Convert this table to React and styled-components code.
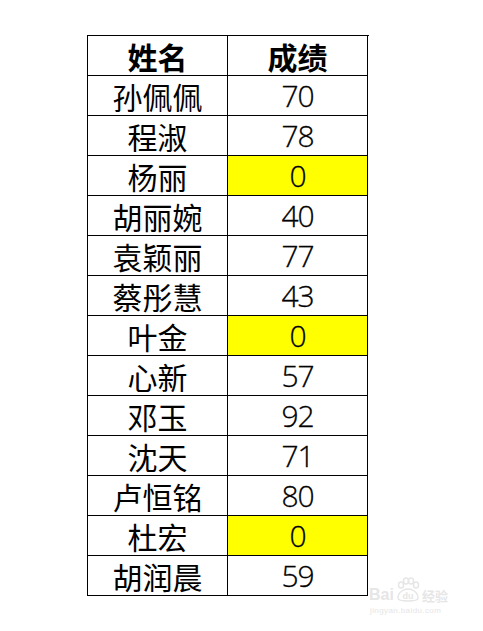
import React from 'react';
import styled, { createGlobalStyle } from 'styled-components';

const GlobalStyle = createGlobalStyle`
  html, body {
    margin: 0;
    padding: 0;
    background: #fff;
  }
`;

const Page = styled.div`
  position: relative;
  width: 483px;
  height: 631px;
  padding: 35px 0 0 87px;
  box-sizing: border-box;
  font-family: "Noto Sans CJK SC", "Noto Sans", sans-serif;
  color: #000;
`;

const Table = styled.div`
  display: grid;
  grid-template-columns: 140px 140px;
  width: 281px;
  border-top: 1px solid #000;
  border-left: 1px solid #000;
`;

const Cell = styled.div`
  height: 39px;
  display: flex;
  align-items: center;
  justify-content: center;
  border-right: 1px solid #000;
  border-bottom: 1px solid #000;
  background: ${(p) => (p.$highlight ? '#ffff00' : '#fff')};
  font-size: 30px;
  font-weight: ${(p) => (p.$head ? 700 : 400)};
  line-height: 36px;
`;

const Score = styled.span`
  font-family: "Open Sans", "Noto Sans", sans-serif;
  font-weight: 300;
  font-size: 30px;
  line-height: 36px;
  letter-spacing: -1px;
  -webkit-text-stroke: 0.3px #000;
`;

const Watermark = styled.div`
  position: absolute;
  left: 369px;
  top: 577px;
  width: 92px;
  color: #e6e6e6;
  font-family: "Liberation Sans", sans-serif;
`;

const Mark = styled.div`
  display: flex;
  align-items: flex-end;
  gap: 1px;
  font-size: 16px;
  font-weight: 700;
  line-height: 16px;
`;

const MarkCn = styled.span`
  font-family: "Noto Sans CJK SC", sans-serif;
  font-size: 13px;
  line-height: 14px;
`;

const MarkSmall = styled.div`
  font-size: 8px;
  margin-top: 3px;
  padding-left: 1px;
  letter-spacing: 0.4px;
`;

const rows = [
  ['孙佩佩', 70],
  ['程淑', 78],
  ['杨丽', 0],
  ['胡丽婉', 40],
  ['袁颖丽', 77],
  ['蔡彤慧', 43],
  ['叶金', 0],
  ['心新', 57],
  ['邓玉', 92],
  ['沈天', 71],
  ['卢恒铭', 80],
  ['杜宏', 0],
  ['胡润晨', 59],
];

export default function App() {
  return (
    <Page>
      <GlobalStyle />
      <Table>
        <Cell $head>姓名</Cell>
        <Cell $head>成绩</Cell>
        {rows.map(([name, score]) => (
          <React.Fragment key={name}>
            <Cell>{name}</Cell>
            <Cell $highlight={score === 0}>
              <Score>{score}</Score>
            </Cell>
          </React.Fragment>
        ))}
      </Table>
      <Watermark>
        <Mark>
          <span>Bai</span>
          <svg width="26" height="26" viewBox="0 0 26 26">
            <g fill="none" stroke="#e6e6e6" strokeWidth="1.5">
              <ellipse cx="6" cy="8" rx="2.5" ry="3" />
              <ellipse cx="11" cy="4" rx="2.5" ry="3" />
              <ellipse cx="16" cy="4" rx="2.5" ry="3" />
              <ellipse cx="21" cy="8" rx="2.5" ry="3" />
              <path d="M3 21 C3 15 9 12 13 12 C17 12 23 15 23 21 C23 25 3 25 3 21 Z" />
            </g>
            <text x="13" y="22" fontSize="9" textAnchor="middle" fill="#e6e6e6" fontWeight="700">du</text>
          </svg>
          <MarkCn>经验</MarkCn>
        </Mark>
        <MarkSmall>jingyan.baidu.com</MarkSmall>
      </Watermark>
    </Page>
  );
}
